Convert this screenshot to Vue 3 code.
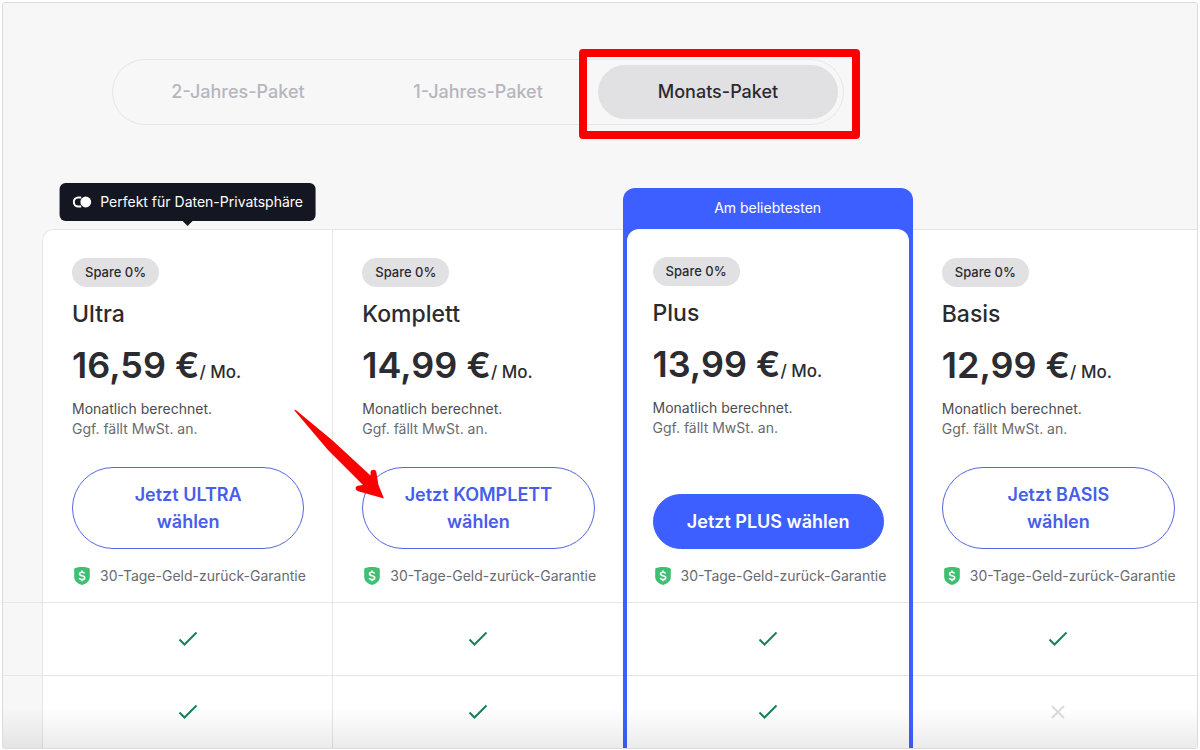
<!--
  PlanPicker

  Pricing table with a billing period switch, one column per plan
  and a feature comparison below.
-->

<template>
  <main class="page">
    <!-- Billing period -->
    <div class="periods" role="group" aria-label="Laufzeit">
      <button
        v-for="period in periods"
        :key="period"
        type="button"
        class="period"
        :class="{ active: period === selected }"
        :aria-pressed="period === selected"
        @click="selected = period"
      >
        {{ period }}
      </button>
    </div>

    <table class="plans">
      <colgroup>
        <col class="gutter-col" />
        <col v-for="plan in plans" :key="plan.name" />
      </colgroup>
      <thead>
        <tr>
          <td class="gutter"></td>
          <th
            v-for="plan in plans"
            :key="plan.name"
            scope="col"
            class="plan"
            :class="{ popular: plan.popular }"
          >
            <div v-if="plan.hint" class="hint">
              <svg width="20" height="12" viewBox="0 0 20 12" aria-hidden="true">
                <path d="M8.6 10.6H5.8a4.6 4.6 0 0 1 0-9.2h2.8" fill="none" stroke="#fff" stroke-width="2" />
                <circle cx="13.2" cy="6" r="5.4" fill="#fff" />
              </svg>
              {{ plan.hint }}
            </div>
            <div v-if="plan.popular" class="ribbon">Am beliebtesten</div>

            <div class="plan-body">
              <span class="badge">Spare 0%</span>
              <h2 class="name">{{ plan.name }}</h2>
              <p class="price">
                <span class="amount">{{ plan.price }} €</span><span class="unit">/ Mo.</span>
              </p>
              <p class="billing">Monatlich berechnet.</p>
              <p class="tax">Ggf. fällt MwSt. an.</p>
              <div class="action">
                <button type="button" class="choose" :class="{ filled: plan.popular }">
                  Jetzt {{ plan.name.toUpperCase() }} wählen
                </button>
                <svg v-if="plan.marked" class="arrow" width="92" height="92" viewBox="0 0 92 92" aria-hidden="true">
                  <path
                    d="M0.5 1.5Q0.3 0.2 1.8 1L38 31L76.5 66.5L76.6 63C77 60 81.500 60 82.200 62.500L84.500 76L90 89.500L65 82.500C61 81.500 60.500 77.500 64 76.800L69 76L34 41Z"
                    fill="#fa0000"
                  />
                </svg>
              </div>
              <p class="guarantee">
                <svg width="16" height="18" viewBox="0 0 16 18" aria-hidden="true">
                  <path
                    d="M8 0C5.500 0 2.500 0.500 1.200 1C0.500 1.300 0.200 1.800 0.200 2.500V10C0.200 14.500 4.500 17 8 18C11.500 17 15.800 14.500 15.800 10V2.500C15.800 1.800 15.500 1.300 14.800 1C13.500 0.500 10.500 0 8 0Z"
                    fill="#3ebf72"
                  />
                  <path
                    d="M10.600 6.500C10.200 5.500 9.200 5.200 8 5.200C6.500 5.200 5.500 5.900 5.500 7C5.500 9.500 10.700 8 10.700 10.700C10.700 11.900 9.500 12.600 8 12.600C6.600 12.600 5.600 12.100 5.200 11M8 3.500V5.200M8 12.600V14.300"
                    fill="none"
                    stroke="#fff"
                    stroke-width="1.600"
                  />
                </svg>
                30-Tage-Geld-zurück-Garantie
              </p>
            </div>
          </th>
        </tr>
      </thead>
      <tbody>
        <tr v-for="(row, index) in features" :key="index">
          <td class="gutter"></td>
          <td
            v-for="(included, column) in row"
            :key="column"
            class="feature"
            :class="{ popular: plans[column].popular }"
          >
            <svg v-if="included" width="20" height="16" viewBox="0 0 20 16" role="img" aria-label="Enthalten">
              <path d="M1.500 8.500L6.500 13.500L18.500 1.500" fill="none" stroke="#1b8058" stroke-width="2" />
            </svg>
            <svg v-else width="20" height="16" viewBox="0 0 20 16" role="img" aria-label="Nicht enthalten">
              <path d="M4 2L16 14M16 2L4 14" fill="none" stroke="#dcdcde" stroke-width="2" />
            </svg>
          </td>
        </tr>
      </tbody>
    </table>
    <div class="fade"></div>
  </main>
</template>

<script setup>
import { ref } from 'vue'

const periods = ['2-Jahres-Paket', '1-Jahres-Paket', 'Monats-Paket']
const selected = ref('Monats-Paket')

const plans = [
  { name: 'Ultra', price: '16,59', hint: 'Perfekt für Daten-Privatsphäre' },
  { name: 'Komplett', price: '14,99', marked: true },
  { name: 'Plus', price: '13,99', popular: true },
  { name: 'Basis', price: '12,99' },
]

// One entry per plan, in column order
const features = [
  [true, true, true, true],
  [true, true, true, false],
]
</script>

<style>
body {
  background: #ffffff;
}
</style>

<style scoped>
.page {
  position: relative;
  box-sizing: border-box;
  margin: 2px;
  padding-top: 56px;
  border: 1px solid #dcdcdd;
  border-radius: 3px;
  background: #f7f7f8;
  color: #2b2b30;
  font-family: Inter, 'Liberation Sans', sans-serif;
  overflow: hidden;
}

/* Billing period switch */
.periods {
  display: flex;
  box-sizing: border-box;
  width: 732px;
  max-width: 80%;
  margin: 0 0 104px 109px;
  padding: 5px;
  border: 1px solid #e6e6e8;
  border-radius: 33px;
}

.period {
  position: relative;
  flex: 1;
  padding: 0;
  border: 0;
  border-radius: 27px;
  background: none;
  color: #b6b6bd;
  font: 500 18px/54px Inter, 'Liberation Sans', sans-serif;
  cursor: pointer;
}

.period.active {
  background: #e1e1e3;
  color: #2b2b30;
}

.period.active::after {
  content: '';
  position: absolute;
  inset: -16px -22px -20px -19px;
  border: 8px solid #fa0000;
  border-radius: 4px;
}

/* Plan table */
.plans {
  width: calc(100% + 6px);
  table-layout: fixed;
  border-collapse: separate;
  border-spacing: 0;
}

.gutter-col {
  width: 39px;
}

.gutter {
  padding: 0;
}

.plan {
  position: relative;
  padding: 28px 28px 16px 29px;
  border-top: 1px solid #e6e6e8;
  border-left: 1px solid #e6e6e8;
  background: #ffffff;
  text-align: left;
  vertical-align: top;
  font-weight: 400;
}

.plan:nth-child(2) {
  border-top-left-radius: 12px;
}

.plan.popular {
  padding: 28px 25px 16px 26px;
  border-top: 0;
  border-right: 4px solid #3e5fff;
  border-left: 4px solid #3e5fff;
}

.popular + .plan,
.popular + .feature {
  border-left: 0;
}

.plan-body {
  position: relative;
}

.hint {
  position: absolute;
  bottom: calc(100% + 9px);
  left: 50%;
  display: flex;
  align-items: center;
  gap: 8px;
  padding: 0 13px;
  border-radius: 6px;
  background: #141721;
  color: #ffffff;
  font-size: 14px;
  font-weight: 400;
  line-height: 38px;
  white-space: nowrap;
  transform: translateX(-50%);
}

.hint::after {
  content: '';
  position: absolute;
  top: 100%;
  left: 50%;
  margin-left: -5px;
  border: 5px solid transparent;
  border-top-color: #141721;
  border-bottom: 0;
}

.ribbon {
  position: absolute;
  top: -41px;
  right: -4px;
  left: -4px;
  height: 60px;
  border-radius: 12px 12px 0 0;
  background: #3e5fff;
  color: #ffffff;
  font-size: 14px;
  font-weight: 400;
  line-height: 40px;
  text-align: center;
}

.ribbon::after {
  content: '';
  position: absolute;
  inset: 41px 4px 0;
  border-radius: 12px 12px 0 0;
  background: #ffffff;
}

.badge {
  display: block;
  width: fit-content;
  padding: 4px 13px;
  border-radius: 15px;
  background: #e1e1e3;
  font-size: 13px;
  font-weight: 500;
  line-height: 21px;
}

.name {
  margin: 11px 0 0;
  font-size: 23px;
  font-weight: 500;
  line-height: 32px;
}

.price {
  margin: 13px 0 5px;
  line-height: 44px;
  white-space: nowrap;
}

.amount {
  font-size: 36px;
  font-weight: 600;
}

.unit {
  font-size: 17px;
  font-weight: 500;
}

.billing,
.tax,
.guarantee {
  margin: 0;
  color: #4c4c52;
  font-size: 14px;
  font-weight: 400;
  line-height: 20px;
}

.tax,
.guarantee {
  color: #6a6a70;
}

.action {
  position: relative;
  display: flex;
  align-items: flex-end;
  min-height: 110px;
}

.popular .action {
  min-height: 111px;
}

.choose {
  width: 100%;
  padding: 13px 32px;
  border: 1px solid #5566e0;
  border-radius: 41px;
  background: #ffffff;
  color: #465eea;
  font: 600 18px/27px Inter, 'Liberation Sans', sans-serif;
  cursor: pointer;
}

.choose.filled {
  padding: 13px 24px;
  border-color: #3e5fff;
  background: #3e5fff;
  color: #ffffff;
}

.arrow {
  position: absolute;
  top: -30px;
  left: -68px;
}

.guarantee {
  display: flex;
  align-items: center;
  gap: 10px;
  margin-top: 17px;
  padding-left: 2px;
  white-space: nowrap;
}

.guarantee svg,
.hint svg {
  flex-shrink: 0;
}

/* Feature rows */
tbody td {
  box-sizing: border-box;
  height: 73px;
  padding: 0;
  border-top: 1px solid #e6e6e8;
}

.feature {
  border-left: 1px solid #e6e6e8;
  background: #ffffff;
  text-align: center;
  vertical-align: middle;
}

/* The row line stays between the blue side borders */
.feature.popular {
  border-top: 0;
  border-right: 4px solid #3e5fff;
  border-left: 4px solid #3e5fff;
  background: linear-gradient(#e6e6e8, #e6e6e8) top / 100% 1px no-repeat padding-box #ffffff;
}

.feature svg {
  display: block;
  margin: 0 auto;
}

.fade {
  position: absolute;
  right: 0;
  bottom: 0;
  left: 0;
  height: 40px;
  background: linear-gradient(rgba(0, 0, 0, 0), rgba(0, 0, 0, 0.08));
  pointer-events: none;
}
</style>
